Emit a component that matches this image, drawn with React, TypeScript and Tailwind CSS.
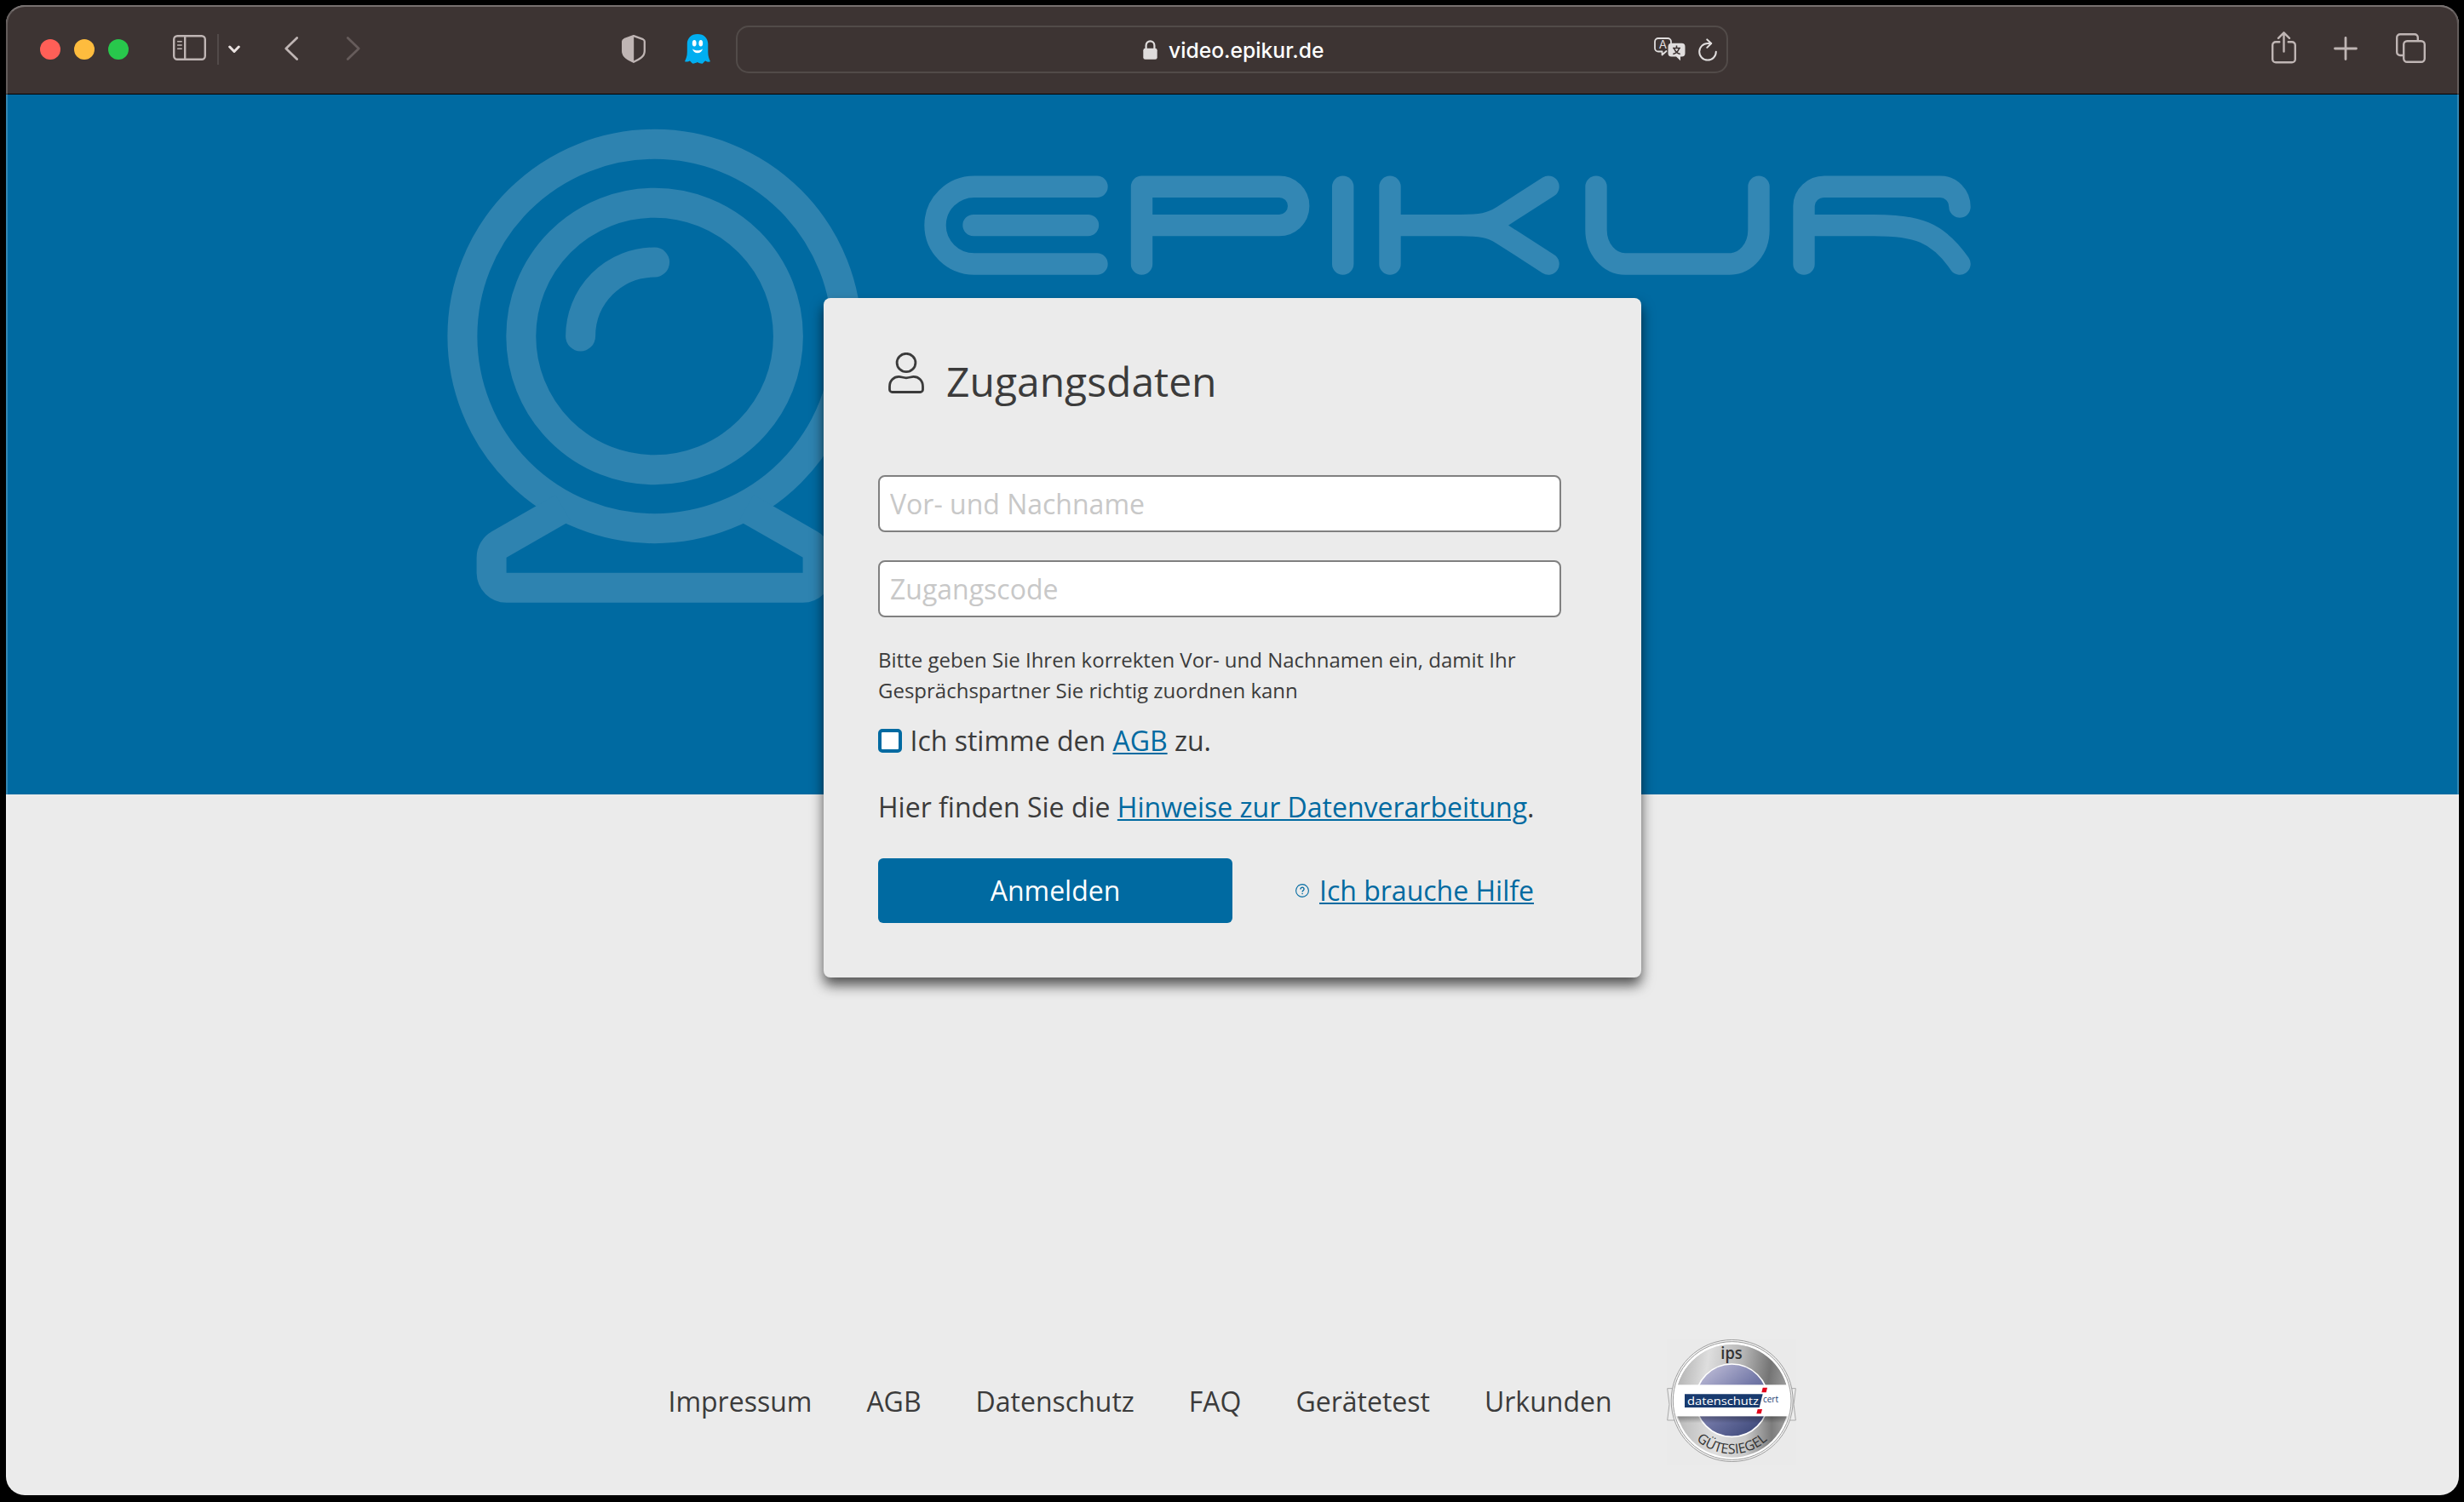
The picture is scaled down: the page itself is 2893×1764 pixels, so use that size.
import React from "react";

const footerLinks = ["Impressum", "AGB", "Datenschutz", "FAQ", "Gerätetest", "Urkunden"];

function SidebarIcon() {
  return (
    <svg className="ml-[52px] h-[30px] w-[39px] shrink-0" viewBox="0 0 39 30" fill="none" stroke="#bfb5b4" strokeWidth="2.4">
      <rect x="1.2" y="1.2" width="36.6" height="27.6" rx="4" />
      <path d="M14.2 1v28" />
      <path d="M5.6 7.7h4.6M5.6 12h4.6M5.6 16.3h4.6" strokeWidth="1.5" strokeLinecap="round" />
    </svg>
  );
}

function GhostIcon() {
  return (
    <svg className="mt-[2px] ml-[46px] h-[35px] w-[30px] shrink-0" viewBox="0 0 30 35">
      <path
        d="M15 0C7.6 0 2.8 4.8 2.8 11.5V21C2.8 26 1.5 29 0 32.3C2.5 33 4.6 32.3 5.6 31.4C7 31.8 7.8 33.6 9.6 34.7C11.5 34.4 13 34 14.8 33C16.8 34 18.6 34.8 20.6 34.7C22 33.7 22.8 31.8 24.4 31.4C26 32.6 27.8 33 30 32.3C28.5 29 27.3 26 27.3 21V11.5C27.3 4.8 22.4 0 15 0Z"
        fill="#00aef0"
      />
      <ellipse cx="11.2" cy="10.7" rx="2.4" ry="3.8" fill="#fff" />
      <ellipse cx="18.8" cy="10.7" rx="2.4" ry="3.8" fill="#fff" />
      <path d="M9 17.3C12 20 18 20 21 17.3C20.2 20.8 18 22.3 15 22.3S9.8 20.8 9 17.3Z" fill="#fff" />
    </svg>
  );
}

function TranslateIcon() {
  return (
    <svg className="ml-auto h-[28px] w-[37px] shrink-0" viewBox="0 0 37 28">
      <path
        d="M14.5 16L9.5 20.5V16.5H5A4 4 0 0 1 1 12.5V5A4 4 0 0 1 5 1H16A4 4 0 0 1 20 5V6.5"
        fill="none"
        stroke="#e0dddd"
        strokeWidth="1.8"
        strokeLinejoin="round"
        strokeLinecap="round"
      />
      <text x="10.4" y="13.4" textAnchor="middle" fontFamily="Inter, sans-serif" fontSize="13.5" fill="#e0dddd">
        A
      </text>
      <path d="M20.5 6.7H32.5A4 4 0 0 1 36.5 10.7V18.5A4 4 0 0 1 32.5 22.5H31V27.3L26 22.5H20.5A4 4 0 0 1 16.5 18.5V10.7A4 4 0 0 1 20.5 6.7Z" fill="#e0dddd" />
      <path d="M26.5 9.5V12M22 12.5H31M23.7 13C24.7 16 27 18.5 30.7 19.6M29.4 13C28.4 16 26 18.5 22.3 19.6" fill="none" stroke="#3d3433" strokeWidth="1.6" />
    </svg>
  );
}

function Toolbar() {
  return (
    <header className="flex h-[105px] shrink-0 items-start border-b border-black bg-[#3d3433]">
      <div className="flex h-[100px] w-full items-center pl-[40px]">
        <div className="mt-[4px] flex gap-4">
          <span className="size-6 rounded-full bg-[#ff5f57]" />
          <span className="size-6 rounded-full bg-[#febc3e]" />
          <span className="size-6 rounded-full bg-[#28c84c]" />
        </div>
        <SidebarIcon />
        <span className="mt-1 ml-[13px] h-9 w-[2px] bg-[#524a49]" />
        <svg className="mt-[3px] ml-[11px] h-[10px] w-[14px] shrink-0" viewBox="0 0 14 10" fill="none" stroke="#eae2e1" strokeWidth="3" strokeLinecap="round" strokeLinejoin="round">
          <path d="M1.7 2L7 7.5L12.3 2" />
        </svg>
        <svg className="mt-[2px] ml-[52px] h-[28px] w-[17px] shrink-0" viewBox="0 0 17 28" fill="none" stroke="#bfb5b4" strokeWidth="2.7" strokeLinecap="round" strokeLinejoin="round">
          <path d="M14.7 1.5L1.8 14L14.7 26.5" />
        </svg>
        <svg className="mt-[2px] ml-[55px] h-[28px] w-[17px] shrink-0" viewBox="0 0 17 28" fill="none" stroke="#665c5b" strokeWidth="2.7" strokeLinecap="round" strokeLinejoin="round">
          <path d="M2.3 1.5L15.2 14L2.3 26.5" />
        </svg>
        <svg className="mt-[3px] ml-[307px] h-[33px] w-[28px] shrink-0" viewBox="0 0 28 33">
          <path d="M14 1.2L25 5.2Q26.8 5.9 26.8 7.8V19C26.8 25.5 20.5 28.8 14 31.8C7.5 28.8 1.2 25.5 1.2 19V7.8Q1.2 5.9 3 5.2Z" fill="none" stroke="#bfb5b4" strokeWidth="2.3" strokeLinejoin="round" />
          <path d="M14.2 0.5L2.5 4.9Q.5 5.7 .5 7.8V19C.5 26 7 29.2 14.2 32.6Z" fill="#bfb5b4" />
        </svg>
        <GhostIcon />
        <div className="mt-[4px] ml-[30px] flex h-[56px] w-[1165px] shrink-0 items-center rounded-[15px] border-2 border-[#524b49] pr-[11px]">
          <svg className="ml-[476px] h-[23px] w-[17px] shrink-0" viewBox="0 0 17 23">
            <path d="M3.6 11V6.5A4.9 5.2 0 0 1 13.4 6.5V11" fill="none" stroke="#dfdcdc" strokeWidth="2.2" />
            <rect x="0.3" y="9.8" width="16.4" height="13" rx="2.4" fill="#dfdcdc" />
          </svg>
          <span className="mt-px ml-[13px] font-['Inter'] text-[24.7px] leading-[32px] font-medium text-white">
            video.epikur.de
          </span>
          <TranslateIcon />
          <svg className="ml-[15px] h-[27px] w-[22px] shrink-0" viewBox="0 0 22 27" fill="none" stroke="#e0dddd" strokeWidth="2" strokeLinecap="round" strokeLinejoin="round">
            <path d="M20.8 15.8A9.8 9.8 0 1 1 11 6H15" />
            <path d="M10.3 1.4L15.2 6L10.3 10.9" />
          </svg>
        </div>
        <svg className="mt-[-1px] ml-[638px] h-[38px] w-[29px] shrink-0" viewBox="0 0 29 38" fill="none" stroke="#bfb5b4" strokeWidth="2.4" strokeLinecap="round" strokeLinejoin="round">
          <path d="M9.3 12.2H5A3.8 3.8 0 0 0 1.2 16V32.5A3.8 3.8 0 0 0 5 36.3H24A3.8 3.8 0 0 0 27.8 32.5V16A3.8 3.8 0 0 0 24 12.2H19.7" />
          <path d="M14.5 23.5V1.5M8 7.8L14.5 1.3L21 7.8" />
        </svg>
        <svg className="mt-[1px] ml-[44px] h-[28px] w-[28px] shrink-0" viewBox="0 0 28 28" stroke="#bfb5b4" strokeWidth="2.8" strokeLinecap="round">
          <path d="M14 1.5V26.5M1.5 14H26.5" />
        </svg>
        <svg className="mt-[1px] ml-[45px] h-[35px] w-[35px] shrink-0" viewBox="0 0 35 35" fill="none" stroke="#bfb5b4" strokeWidth="2.4">
          <rect x="9.2" y="9.2" width="24.6" height="24.6" rx="4" />
          <path d="M9 26H5A3.8 3.8 0 0 1 1.2 22.2V5A3.8 3.8 0 0 1 5 1.2H22A3.8 3.8 0 0 1 25.8 5V9" />
        </svg>
      </div>
    </header>
  );
}

function WebcamDrawing() {
  return (
    <svg className="-mt-px h-[620px] w-[560px] shrink-0" viewBox="0 0 560 620" fill="none" stroke="#2e83b0" strokeWidth="35">
      <circle cx="268.6" cy="275" r="225.7" />
      <circle cx="268.6" cy="275" r="156.8" />
      <path d="M268.6 188A87 87 0 0 0 181.6 275" strokeLinecap="round" />
      <path d="M161 476.5L86 519.5A18 18 0 0 0 77.1 535V553A17.5 17.5 0 0 0 94.6 570.2H442.6A17.5 17.5 0 0 0 460.1 553V535A18 18 0 0 0 451.2 519.5L376.2 476.5" />
    </svg>
  );
}

function BrandMark() {
  return (
    <svg
      className="mt-[59px] h-[180px] w-[1280px] shrink-0"
      viewBox="0 0 1280 180"
      fill="none"
      stroke="#3387b4"
      strokeWidth="25.4"
      strokeLinecap="round"
      strokeLinejoin="round"
      role="img"
      aria-label="EPIKUR"
    >
      <path d="M228 39.2H84A46 45.4 0 0 0 38 84.6A46 45.4 0 0 0 84 130H228M83 84.6H217.5" />
      <path d="M280.5 130V39.2H442A22.7 22.7 0 0 1 442 84.6H280.5" />
      <path d="M516.7 39.2V130" />
      <path d="M572 39.2V130M572 84.6H655C678 84.6 690 83 704 74L758 39.2M655 84.6C678 84.6 690 86.2 704 95.2L758 130" />
      <path d="M814 39.2V90A34 40 0 0 0 848 130H971A34 40 0 0 0 1005 90V39.2" />
      <path d="M1058 130V62A24 23 0 0 1 1082 39.2H1218A23 24 0 0 1 1241 63M1058 84.6H1140C1190 84.6 1215 92 1241 130" />
    </svg>
  );
}

function LoginCard() {
  return (
    <main className="relative -mt-[583px] flex h-[798px] w-[960px] shrink-0 flex-col self-center rounded-[8px] bg-[#ebebeb] pt-[62px] pr-[94px] pl-[64px] shadow-[0_9px_15px_rgba(0,0,0,0.65)]">
      <div className="flex items-start">
        <svg className="mt-[2px] ml-3 h-[48px] w-[42px] shrink-0" viewBox="0 0 42 48" fill="none" stroke="#3b3b3b" strokeWidth="2.8">
          <ellipse cx="21" cy="12" rx="10.9" ry="10.7" />
          <path d="M1.5 43.5V40C1.5 32.5 6.5 28.4 12.5 28.4C15 28.4 17.5 29.8 21 29.8C24.5 29.8 27 28.4 29.5 28.4C35.5 28.4 40.5 32.5 40.5 40V43.5A3 3 0 0 1 37.5 46.5H4.5A3 3 0 0 1 1.5 43.5Z" />
        </svg>
        <h1 className="ml-[26px] text-[48px] leading-[72px]">Zugangsdaten</h1>
      </div>

      <input
        className="mt-[74px] block h-[67px] w-[802px] rounded-[8px] border-2 border-[#808080] bg-white px-3 text-[32px] leading-[43px] placeholder:text-[#c8c8c8] placeholder:opacity-100"
        placeholder="Vor- und Nachname"
      />
      <input
        className="mt-[33px] block h-[67px] w-[802px] rounded-[8px] border-2 border-[#808080] bg-white px-3 text-[32px] leading-[43px] placeholder:text-[#c8c8c8] placeholder:opacity-100"
        placeholder="Zugangscode"
      />

      <p className="mt-8 text-2xl leading-9">
        Bitte geben Sie Ihren korrekten Vor- und Nachnamen ein, damit Ihr
        <br />
        Gesprächspartner Sie richtig zuordnen kann
      </p>

      <label className="mt-[17px] flex items-center text-[32px] leading-[48px]">
        <span className="size-7 shrink-0 rounded-[5px] border-4 border-[#006aa1] bg-white" />
        <span className="ml-[9.5px]">
          Ich stimme den{" "}
          <a className="text-[#006aa1] underline decoration-2 underline-offset-2">AGB</a> zu.
        </span>
      </label>

      <p className="mt-[30px] text-[32px] leading-[48px] whitespace-nowrap">
        Hier finden Sie die{" "}
        <a className="text-[#006aa1] underline decoration-2 underline-offset-2">Hinweise zur Datenverarbeitung</a>.
      </p>

      <div className="mt-9 flex items-center text-[32px]">
        <button className="h-[76px] w-[416px] shrink-0 rounded-[6px] bg-[#006aa1] leading-[48px] text-white">
          Anmelden
        </button>
        <svg className="ml-[74px] size-4 shrink-0" viewBox="0 0 16 16" fill="none" stroke="#006aa1">
          <circle cx="8" cy="8" r="7.4" strokeWidth="1.1" />
          <path d="M5.9 6.4C5.9 3.4 10.3 3.6 10.1 6.2C10 7.7 8.1 7.8 8.1 9.5" strokeWidth="1.3" />
          <circle cx="8.1" cy="11.6" r="0.8" fill="#006aa1" stroke="none" />
        </svg>
        <a className="ml-3 leading-[48px] whitespace-nowrap text-[#006aa1] underline decoration-2 underline-offset-2">
          Ich brauche Hilfe
        </a>
      </div>
    </main>
  );
}

function QualitySeal() {
  return (
    <svg className="h-[148px] w-[152px] shrink-0" viewBox="51 65 456 444">
      <defs>
        <linearGradient id="metal" x1="0" x2="1" y1="0" y2="0.15">
          <stop offset="0" stopColor="#aaaaaa" />
          <stop offset="0.3" stopColor="#dedede" />
          <stop offset="0.6" stopColor="#b5b5b5" />
          <stop offset="0.85" stopColor="#747474" />
          <stop offset="1" stopColor="#999999" />
        </linearGradient>
        <linearGradient id="metalLow" x1="0" x2="1" y1="0" y2="0">
          <stop offset="0" stopColor="#b8b8b8" />
          <stop offset="0.35" stopColor="#e0e0e0" />
          <stop offset="0.62" stopColor="#c9c9c9" />
          <stop offset="0.85" stopColor="#7c7c7c" />
          <stop offset="1" stopColor="#a5a5a5" />
        </linearGradient>
        <linearGradient id="core" x1="0.1" x2="0.8" y1="0.1" y2="0.95">
          <stop offset="0" stopColor="#b9b8d4" />
          <stop offset="0.5" stopColor="#7479a8" />
          <stop offset="1" stopColor="#404b7c" />
        </linearGradient>
        <linearGradient id="bandShade" x1="0" x2="0" y1="0" y2="1">
          <stop offset="0" stopColor="#000" stopOpacity="0.3" />
          <stop offset="1" stopColor="#000" stopOpacity="0" />
        </linearGradient>
        <clipPath id="upper">
          <rect x="51" y="65" width="456" height="200" />
        </clipPath>
        <clipPath id="disc">
          <circle cx="281" cy="284" r="203" />
        </clipPath>
        <path id="arc" d="M104 340A185 185 0 0 0 458 340" />
      </defs>
      <rect x="51" y="65" width="456" height="444" fill="#eaeaea" />
      <path d="M53 241H505L498 297L505 353H53L60 297Z" fill="#ededed" stroke="#a9a9a9" strokeWidth="3" />
      <circle cx="281" cy="284" r="214.5" fill="#f4f4f4" stroke="#9c9c9c" strokeWidth="3" />
      <circle cx="281" cy="284" r="208" fill="#fff" stroke="#9c9c9c" strokeWidth="3" />
      <circle cx="281" cy="285" r="199" fill="url(#metalLow)" />
      <circle cx="281" cy="285" r="199" fill="url(#metal)" clipPath="url(#upper)" />
      <circle cx="280" cy="283" r="128" fill="url(#core)" stroke="#fff" strokeWidth="5" />
      <g clipPath="url(#disc)">
        <rect x="75" y="339" width="410" height="24" fill="url(#bandShade)" />
        <rect x="75" y="228" width="410" height="111" fill="#fff" />
      </g>
      <path d="M114 261H389L377 308H114Z" fill="#183a6e" />
      <path d="M389 238H405L401 255H385ZM371 314H387L383 330H367Z" fill="#e2001a" />
      <text x="123" y="298" fontFamily="'Open Sans', sans-serif" fontSize="40" fill="#fff" textLength="252" lengthAdjust="spacingAndGlyphs">
        datenschutz
      </text>
      <text x="390" y="291" fontFamily="'Open Sans', sans-serif" fontSize="31" fontWeight="500" fill="#183a6e" textLength="54" lengthAdjust="spacingAndGlyphs">
        cert
      </text>
      <text x="279" y="136" textAnchor="middle" fontFamily="'Open Sans', sans-serif" fontSize="58" fontWeight="600" fill="#333" textLength="76" lengthAdjust="spacingAndGlyphs">
        ips
      </text>
      <text fontFamily="'Open Sans', sans-serif" fontSize="48" fontWeight="500" fill="#333">
        <textPath href="#arc" startOffset="50%" textAnchor="middle">
          GÜTESIEGEL
        </textPath>
      </text>
    </svg>
  );
}

export default function App() {
  return (
    <div className="h-[1764px] w-[2893px] overflow-hidden bg-black pt-[6px] pl-[7px] font-['Open_Sans',sans-serif] text-[#3b3b3b]">
      <div className="relative flex h-[1750px] w-[2880px] flex-col overflow-hidden rounded-[22px] bg-[#ebebeb]">
        <Toolbar />
        <section className="flex h-[822px] shrink-0 items-start bg-[#006aa1] pt-[10px] pl-[493px]">
          <WebcamDrawing />
          <BrandMark />
        </section>
        <LoginCard />
        <footer className="mt-auto flex items-center justify-center gap-16 pr-px pb-9 text-[32px] leading-[48px]">
          {footerLinks.map((label) => (
            <a key={label}>{label}</a>
          ))}
          <QualitySeal />
        </footer>
        <div className="pointer-events-none absolute inset-0 rounded-[22px] border-2 border-b-0 border-white/20 border-t-white/30" />
      </div>
    </div>
  );
}
